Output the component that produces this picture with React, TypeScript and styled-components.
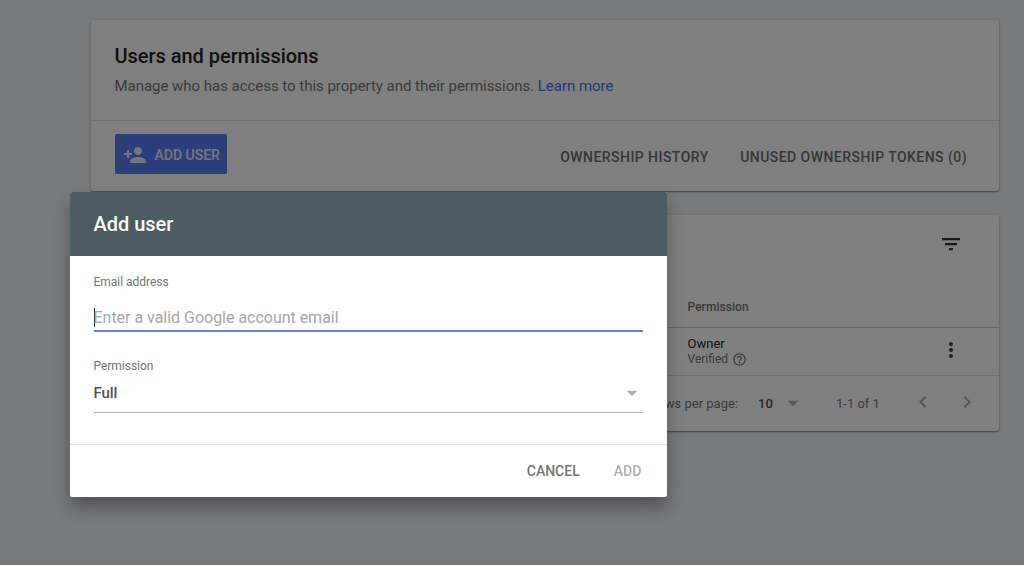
import React from "react";
import styled, { createGlobalStyle } from "styled-components";
import {
  MdPersonAdd,
  MdMoreVert,
  MdHelpOutline,
  MdArrowDropDown,
  MdChevronLeft,
  MdChevronRight,
} from "react-icons/md";

const App = () => {
  return (
    <Page>
      <Global />

      <Card $height={171.5}>
        <Intro>
          <Title>Users and permissions</Title>
          <Sub>
            Manage who has access to this property and their permissions. <Learn>Learn more</Learn>
          </Sub>
        </Intro>

        <Actions>
          <AddUser>
            <PersonIcon />
            <span>ADD USER</span>
          </AddUser>

          <Links>
            <TextLink>OWNERSHIP HISTORY</TextLink>
            <TextLink>UNUSED OWNERSHIP TOKENS (0)</TextLink>
          </Links>
        </Actions>
      </Card>

      <Card $height={216.5}>
        <Tools>
          <svg width="24" height="24" viewBox="0 0 24 24" fill="currentColor">
            <path d="M3 6h18v2.2H3zM6 11h12v2.2H6zM10 16h4v2.2h-4z" />
          </svg>
        </Tools>

        <HeadRow>Permission</HeadRow>

        <Row>
          <div>
            <Role>Owner</Role>
            <Status>
              Verified <MdHelpOutline size={15} />
            </Status>
          </div>
          <MoreIcon />
        </Row>

        <Pager>
          <PerPage>Rows per page:</PerPage>
          <Count>10</Count>
          <DropIcon />
          <Range>1-1 of 1</Range>
          <Arrow>
            <MdChevronLeft size={24} />
          </Arrow>
          <Arrow>
            <MdChevronRight size={24} />
          </Arrow>
        </Pager>
      </Card>

      <Overlay>
        <Dialog>
          <DialogHead>Add user</DialogHead>

          <Form>
            <Label>Email address</Label>
            <Email>
              <Caret />
              Enter a valid Google account email
            </Email>

            <Label>Permission</Label>
            <Select>
              Full
              <DropIcon />
            </Select>
          </Form>

          <DialogFoot>
            <FootButton $color="#757575">CANCEL</FootButton>
            <FootButton $color="#b0b0b0">ADD</FootButton>
          </DialogFoot>
        </Dialog>
      </Overlay>
    </Page>
  );
};

export default App;

const Global = createGlobalStyle`
* {
  box-sizing: border-box;
}
body {
  margin: 0;
  overflow: hidden;
  font-family: Roboto, "Liberation Sans", sans-serif;
}
button {
  font-family: inherit;
  border: none;
  background: none;
  padding: 0;
}
`;

const Page = styled.div`
height: 565px;
padding: 19.5px 25px 0 91px;
display: flex;
flex-direction: column;
gap: 23.5px;
background-color: #f1f3f6;
`;

const Card = styled.section<{ $height: number }>`
height: ${(p) => p.$height}px;
flex-shrink: 0;
display: flex;
flex-direction: column;
background-color: white;
border-radius: 2px;
box-shadow: 0 1px 3px rgba(0, 0, 0, 0.3), 0 1px 1px rgba(0, 0, 0, 0.25);
`;

const Intro = styled.div`
height: 101px;
padding: 23px 23.5px 0;
border-bottom: 1px solid #dcdcdc;
`;

const Title = styled.h1`
margin: 0;
font-size: 20px;
font-weight: 500;
line-height: 26px;
letter-spacing: -0.03px;
color: #212121;
`;

const Sub = styled.p`
margin: 7px 0 0;
font-size: 15px;
line-height: 20px;
letter-spacing: -0.03px;
color: #757575;
`;

const Learn = styled.a`
color: #4d69e8;
`;

const Actions = styled.div`
flex: 1;
padding: 0 32px 0 23.5px;
display: flex;
justify-content: space-between;
align-items: center;
`;

const AddUser = styled.button`
width: 112.5px;
height: 40px;
margin-bottom: 3px;
padding: 1px 0 0 8px;
display: flex;
align-items: center;
gap: 8px;
font-size: 14px;
font-weight: 500;
color: #e8ecfa;
background-color: #587df5;
border-radius: 2px;
white-space: nowrap;
`;

const PersonIcon = styled(MdPersonAdd)`
width: 24px;
height: 24px;
flex-shrink: 0;
`;

const Links = styled.div`
margin-top: 2.5px;
display: flex;
gap: 31.5px;
`;

const TextLink = styled.button`
font-size: 14px;
font-weight: 500;
letter-spacing: 0.45px;
color: #6c6c6c;
`;

const Tools = styled.div`
height: 72.5px;
padding: 17px 36px 0 0;
display: flex;
justify-content: flex-end;
color: #303030;
`;

const HeadRow = styled.div`
height: 41px;
padding: 12px 0 0 596.5px;
font-size: 12px;
font-weight: 500;
line-height: 16px;
letter-spacing: 0.05px;
color: #757575;
border-bottom: 1px solid #cccccc;
`;

const Row = styled.div`
height: 48px;
padding: 0 36px 0 596.5px;
display: flex;
justify-content: space-between;
align-items: center;
color: #424242;
border-bottom: 1px solid #dcdcdc;
`;

const MoreIcon = styled(MdMoreVert)`
width: 24px;
height: 24px;
margin-bottom: 3px;
`;

const DropIcon = styled(MdArrowDropDown)`
width: 26px;
height: 26px;
color: #b0b0b0;
`;

const Role = styled.div`
font-size: 13px;
line-height: 16px;
color: #212121;
`;

const Status = styled.div`
height: 15px;
display: flex;
align-items: center;
gap: 4px;
font-size: 12px;
line-height: 15px;
color: #757575;

svg {
  margin-bottom: 1px;
}
`;

const Pager = styled.div`
flex: 1;
padding: 0 20px 1px 0;
display: flex;
justify-content: flex-end;
align-items: center;
font-size: 13px;
color: #757575;
`;

const PerPage = styled.span`
margin-right: 20px;
`;

const Count = styled.span`
width: 22px;
font-weight: 500;
color: #505050;
`;

const Range = styled.span`
width: 75px;
margin-left: 30px;
`;

const Arrow = styled.button`
margin-bottom: 3px;
display: flex;
color: #aaaaaa;

& + & {
  margin-left: 20px;
}
`;

const Overlay = styled.div`
position: absolute;
inset: 0;
background-color: rgba(0, 0, 0, 0.5);
`;

const Dialog = styled.div`
position: absolute;
left: 69.5px;
top: 192.4px;
width: 597.8px;
height: 304.6px;
display: flex;
flex-direction: column;
background-color: white;
border-radius: 2px;
overflow: hidden;
box-shadow: 0 12px 15px rgba(0, 0, 0, 0.2), 0 8px 20px rgba(0, 0, 0, 0.12);
`;

const DialogHead = styled.div`
height: 63.6px;
padding: 0 24px;
display: flex;
align-items: center;
font-size: 20px;
font-weight: 500;
letter-spacing: -0.03px;
color: white;
background-color: #4d5b62;
`;

const Form = styled.div`
flex: 1;
padding: 18px 24px 0;
`;

const Label = styled.div`
font-size: 12px;
line-height: 16px;
letter-spacing: -0.03px;
color: #757575;
`;

const Email = styled.div`
height: 42px;
margin-bottom: 26px;
padding-top: 18px;
display: flex;
font-size: 16px;
line-height: 20px;
letter-spacing: -0.02px;
color: #a6a6a6;
border-bottom: 2px solid #6286c8;
`;

const Caret = styled.span`
width: 1px;
height: 19px;
margin-right: -1px;
background-color: #212121;
`;

const Select = styled.div`
height: 39px;
display: flex;
justify-content: space-between;
align-items: center;
font-size: 15px;
font-weight: 500;
letter-spacing: -0.1px;
color: #505050;
border-bottom: 1px solid #b0b0b0;

svg {
  margin-right: -2px;
}
`;

const DialogFoot = styled.div`
height: 53px;
padding: 1px 26px 0 0;
display: flex;
justify-content: flex-end;
align-items: center;
gap: 34px;
border-top: 1px solid #e3e6e8;
`;

const FootButton = styled.button<{ $color: string }>`
font-size: 14px;
font-weight: 500;
color: ${(p) => p.$color};
`;
